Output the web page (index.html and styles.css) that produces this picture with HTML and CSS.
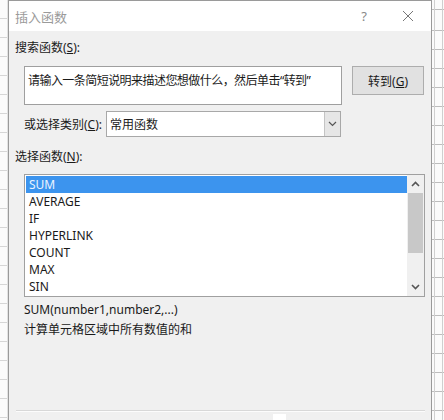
FILE: index.html
```html
<!DOCTYPE html>
<html>
<head>
  <title>插入函数</title>
<link rel="stylesheet" href="styles.css">
</head>
<body>
  <div class="sheet">
    <div class="gutter left"></div>
    <div class="dialog">
      <div class="titlebar">
        <span class="title">插入函数</span>
        <span class="help">?</span>
        <span class="close">
          <svg width="12" height="12" viewBox="0 0 12 12"><path d="M1 1 L11 11 M11 1 L1 11" stroke="#777" stroke-width="1" fill="none"/></svg>
        </span>
      </div>
      <div class="content">
        <div class="label">搜索函数(<u>S</u>):</div>
        <div class="search-row">
          <div class="search-box">请输入一条简短说明来描述您想做什么，然后单击“转到”</div>
          <button class="go" type="button">转到(<u>G</u>)</button>
        </div>
        <div class="category-row">
          <span class="cat-label">或选择类别(<u>C</u>):</span>
          <div class="select">
            <span class="select-text">常用函数</span>
            <span class="select-btn">
              <svg width="9" height="6" viewBox="0 0 9 6"><path d="M1 1 L4.5 4.5 L8 1" stroke="#555" stroke-width="1.2" fill="none"/></svg>
            </span>
          </div>
        </div>
        <div class="label second">选择函数(<u>N</u>):</div>
        <div class="listbox">
          <div class="items">
            <div class="item selected">SUM</div>
            <div class="item">AVERAGE</div>
            <div class="item">IF</div>
            <div class="item">HYPERLINK</div>
            <div class="item">COUNT</div>
            <div class="item">MAX</div>
            <div class="item">SIN</div>
          </div>
          <div class="scrollbar">
            <div class="arrow">
              <svg width="9" height="6" viewBox="0 0 9 6"><path d="M1 5 L4.5 1.5 L8 5" stroke="#555" stroke-width="1.6" fill="none"/></svg>
            </div>
            <div class="track"><div class="thumb"></div></div>
            <div class="arrow">
              <svg width="9" height="6" viewBox="0 0 9 6"><path d="M1 1 L4.5 4.5 L8 1" stroke="#555" stroke-width="1.6" fill="none"/></svg>
            </div>
          </div>
        </div>
        <div class="syntax">SUM(number1,number2,...)</div>
        <div class="desc">计算单元格区域中所有数值的和</div>
        <div class="spacer"></div>
        <div class="separator"></div>
        <div class="bottom"><span class="stub"></span></div>
      </div>
    </div>
    <div class="gutter right"></div>
  </div>
</body>
</html>
```

FILE: styles.css
```css
body {
  margin: 0;
  font-family: "Noto Sans", "Noto Sans CJK SC", sans-serif;
  font-size: 12px;
  color: #1a1a1a;
}

.sheet {
  display: flex;
  width: 444px;
  height: 420px;
  overflow: hidden;
}

.gutter {
  height: 420px;
  background-color: #fbfbfb;
  background-image: repeating-linear-gradient(to bottom, transparent 0, transparent 18px, #d6d6d6 18px, #d6d6d6 19px);
}

.gutter.left {
  width: 8px;
  border-right: 1px solid #e2e2e2;
  box-sizing: border-box;
}

.gutter.right {
  width: 12px;
  background-image:
    linear-gradient(to right, #d0d0d0 0, #d0d0d0 1px, transparent 1px, transparent 8px, #cfcfcf 8px, #cfcfcf 9px, transparent 9px),
    repeating-linear-gradient(to bottom, transparent 0, transparent 18px, #bdbdbd 18px, #bdbdbd 19px);
  background-position: 2px 0, 0 12px;
}

.dialog {
  width: 424px;
  height: 420px;
  box-sizing: border-box;
  border: 1px solid #9a9a9a;
  border-bottom: none;
  background: #f0f0f0;
  display: flex;
  flex-direction: column;
}

.titlebar {
  height: 30px;
  background: #fff;
  display: flex;
  align-items: center;
  padding-left: 6px;
  flex-shrink: 0;
}

.title {
  color: #9a9a9a;
  font-size: 13px;
  flex: 1;
}

.help {
  color: #888;
  font-size: 13px;
  width: 20px;
  text-align: center;
  margin-right: 26px;
}

.close {
  width: 16px;
  display: flex;
  justify-content: center;
  margin-right: 15px;
}

.content {
  flex: 1;
  display: flex;
  flex-direction: column;
  padding: 0 6px;
}

.label {
  line-height: 16px;
  margin-top: 9px;
}

.label.second {
  margin-top: 12px;
}

.search-row {
  display: flex;
  align-items: flex-start;
  gap: 10px;
  margin: 10px 0 0 9px;
}

.search-box {
  width: 318px;
  height: 39px;
  box-sizing: border-box;
  background: #fff;
  border: 1px solid #9f9f9f;
  padding: 6px 0 0 3px;
  line-height: 16px;
  white-space: nowrap;
  letter-spacing: -0.55px;
}

.go {
  width: 72px;
  height: 29px;
  background: #e1e1e1;
  border: 1px solid #adadad;
  font-family: "Noto Sans", "Noto Sans CJK SC", sans-serif;
  font-size: 12px;
  color: #1a1a1a;
  padding: 0;
}

.category-row {
  display: flex;
  align-items: center;
  margin: 6px 0 0 9px;
  height: 26px;
}

.cat-label {
  width: 82px;
}

.select {
  width: 235px;
  height: 26px;
  box-sizing: border-box;
  background: #fff;
  border: 1px solid #a8a8a8;
  display: flex;
  align-items: center;
}

.select-text {
  flex: 1;
  padding-left: 3px;
}

.select-btn {
  width: 15px;
  height: 24px;
  background: #e6e6e6;
  border-left: 1px solid #c4c4c4;
  display: flex;
  align-items: center;
  justify-content: center;
}

.listbox {
  margin: 9px 0 0 9px;
  height: 123px;
  box-sizing: border-box;
  border: 1px solid #a0a0a0;
  background: #fff;
  padding: 1px 0 1px 1px;
  display: flex;
}

.items {
  flex: 1;
}

.item {
  height: 17px;
  line-height: 17px;
  padding-left: 3px;
  font-size: 12px;
}

.item.selected {
  background: #3c94ee;
  color: #eaf3ff;
}

.scrollbar {
  width: 17px;
  display: flex;
  flex-direction: column;
  background: #f0f0f0;
  margin-top: -1px;
  margin-bottom: -1px;
}

.arrow {
  height: 18px;
  display: flex;
  align-items: center;
  justify-content: center;
}

.track {
  flex: 1;
}

.thumb {
  height: 60px;
  margin: 0 1px;
  background: #c8c8c8;
}

.syntax {
  margin: 5px 0 0 9px;
  line-height: 16px;
}

.desc {
  margin: 4px 0 0 9px;
  line-height: 16px;
}

.spacer {
  flex: 1;
}

.separator {
  height: 1px;
  background: #d8d8d8;
  border-bottom: 1px solid #fcfcfc;
  margin-left: 1px;
}

.bottom {
  height: 8px;
  position: relative;
}

.stub {
  position: absolute;
  left: 258px;
  top: 2px;
  width: 13px;
  height: 6px;
  background: #fff;
}
```
